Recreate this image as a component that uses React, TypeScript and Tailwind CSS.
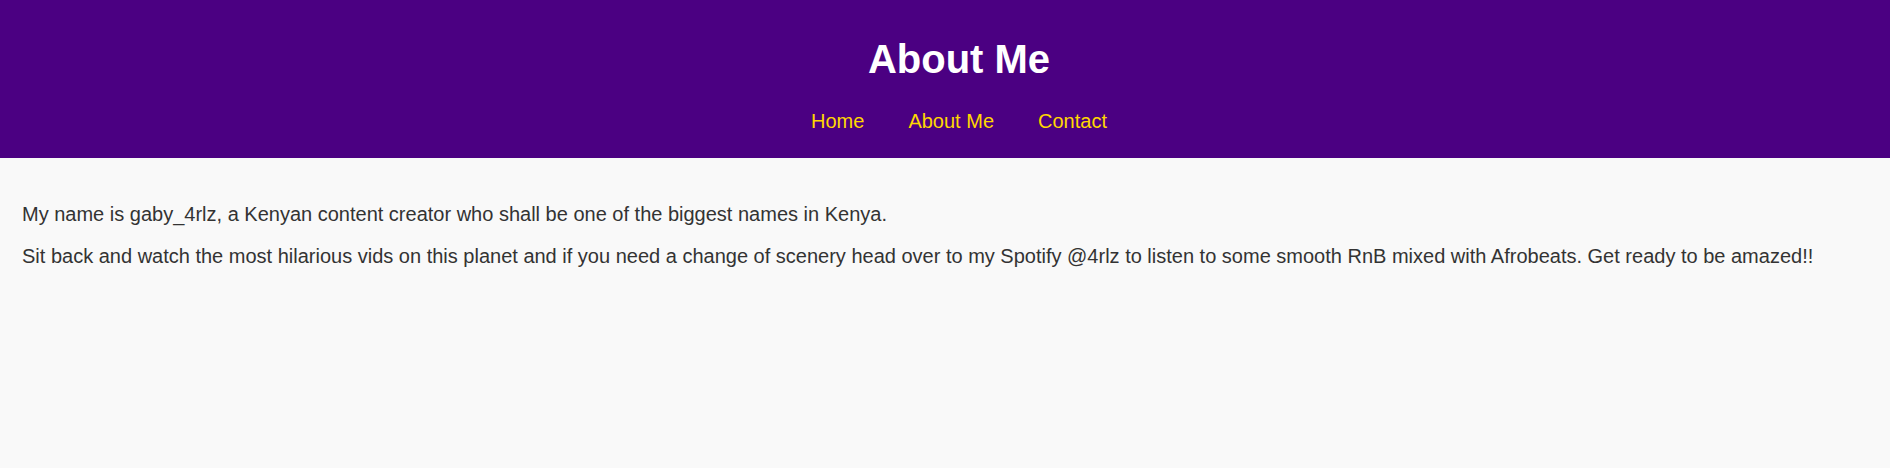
export default function App() {
  return (
    <div className="min-h-[468px] bg-[#f9f9f9] text-[#333333]" style={{ fontFamily: '"Liberation Sans", Arial, sans-serif' }}>
      <header className="bg-[#4b0082] pt-[36px] pb-[25px] pl-[28px] text-center">
        <h1 className="text-[40px] leading-[46px] font-bold text-white">About Me</h1>
        <nav className="mt-[28px] flex justify-center gap-[44px] text-[20px] leading-[23px]">
          <a href="#" className="text-[#ffd700]">Home</a>
          <a href="#" className="text-[#ffd700]">About Me</a>
          <a href="#" className="text-[#ffd700]">Contact</a>
        </nav>
      </header>
      <main className="px-[22px] pt-[45px] text-[20px] leading-[23px]">
        <p>My name is gaby_4rlz, a Kenyan content creator who shall be one of the biggest names in Kenya.</p>
        <p className="mt-[19px]">Sit back and watch the most hilarious vids on this planet and if you need a change of scenery head over to my Spotify @4rlz to listen to some smooth RnB mixed with Afrobeats. Get ready to be amazed!!</p>
      </main>
    </div>
  );
}
